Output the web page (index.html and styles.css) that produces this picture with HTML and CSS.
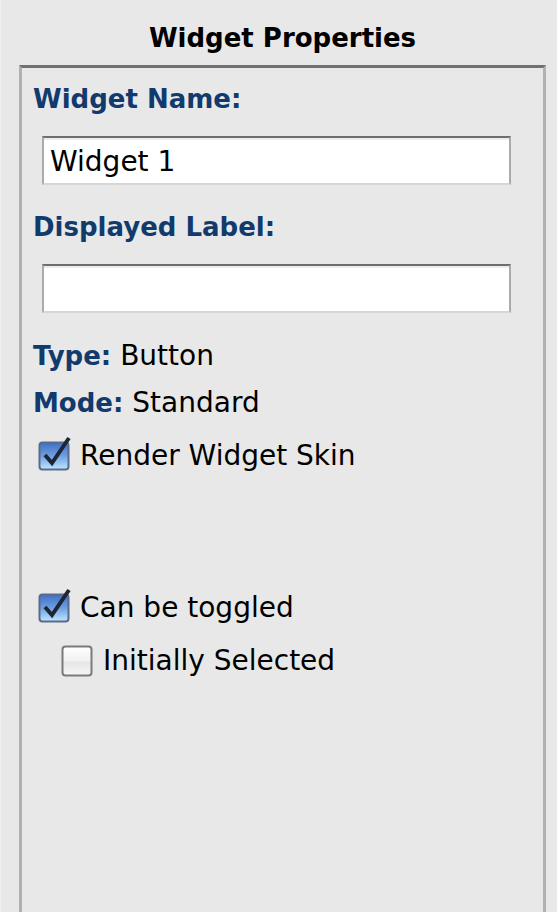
FILE: index.html
```html
<!DOCTYPE html>
<html>
<head>
<meta charset="utf-8">
<link rel="stylesheet" href="styles.css">
</head>
<body>
<div class="page">
  <div class="title">Widget Properties</div>
  <section class="panel">
    <div class="field-label first">Widget Name:</div>
    <div class="input">Widget 1</div>
    <div class="field-label">Displayed Label:</div>
    <div class="input"></div>
    <div class="info type"><b>Type:</b> Button</div>
    <div class="info mode"><b>Mode:</b> Standard</div>
    <div class="check render">
      <svg class="box" width="32" height="30" viewBox="0 0 32 30">
        <defs>
          <linearGradient id="blue" x1="0" y1="0" x2="0" y2="1">
            <stop offset="0" stop-color="#3d6fc4"/>
            <stop offset="0.5" stop-color="#6f9fe2"/>
            <stop offset="1" stop-color="#bfe8ff"/>
          </linearGradient>
        </defs>
        <rect x="1.5" y="1.5" width="29" height="27" rx="3" fill="url(#blue)" stroke="#5b6a8c" stroke-width="2"/>
        <path d="M7 14 L14 22 L31 -3" fill="none" stroke="#1c2634" stroke-width="4"/>
      </svg>
      <span>Render Widget Skin</span>
    </div>
    <div class="check toggled">
      <svg class="box" width="32" height="30" viewBox="0 0 32 30">
        <rect x="1.5" y="1.5" width="29" height="27" rx="3" fill="url(#blue)" stroke="#5b6a8c" stroke-width="2"/>
        <path d="M7 14 L14 22 L31 -3" fill="none" stroke="#1c2634" stroke-width="4"/>
      </svg>
      <span>Can be toggled</span>
    </div>
    <div class="check sub">
      <svg class="box" width="32" height="32" viewBox="0 0 32 32">
        <defs>
          <linearGradient id="white" x1="0" y1="0" x2="0" y2="1">
            <stop offset="0" stop-color="#ffffff"/>
            <stop offset="0.5" stop-color="#f1f1f1"/>
            <stop offset="0.55" stop-color="#e6e6e6"/>
            <stop offset="1" stop-color="#f6f6f6"/>
          </linearGradient>
        </defs>
        <rect x="1.5" y="1.5" width="29" height="29" rx="3" fill="url(#white)" stroke="#7a7a7a" stroke-width="2"/>
      </svg>
      <span>Initially Selected</span>
    </div>
  </section>
</div>
</body>
</html>
```
FILE: styles.css
```css
html, body {
  margin: 0;
  padding: 0;
  background: #e8e8e8;
  overflow: hidden;
}
.page {
  height: 912px;
  padding-top: 21px;
  box-sizing: border-box;
  font-family: "DejaVu Sans", "Verdana", sans-serif;
  font-size: 28px;
  line-height: 34px;
  color: #000;
  border-left: 1px solid #f0f0f0;
  display: flex;
  flex-direction: column;
}
.title {
  font-weight: bold;
  font-size: 26px;
  text-align: center;
  margin-left: 18px;
  width: 527px;
  height: 34px;
}
.panel {
  margin-top: 10px;
  margin-left: 18px;
  width: 527px;
  flex: 1;
  box-sizing: border-box;
  border-top: 3px solid #717171;
  border-left: 3px solid #b1b1b1;
  border-right: 3px solid #b1b1b1;
  padding: 0 0 0 11px;
  display: flex;
  flex-direction: column;
  align-items: flex-start;
}
.field-label {
  font-weight: bold;
  font-size: 26px;
  color: #113a6d;
  margin-top: 25px;
}
.field-label.first {
  margin-top: 14px;
}
.input {
  margin-top: 20px;
  margin-left: 9px;
  width: 469px;
  height: 49px;
  box-sizing: border-box;
  background: #fff;
  border-top: 2px solid #6e6e6e;
  border-left: 2px solid #ababab;
  border-right: 2px solid #ababab;
  border-bottom: 2px solid #d6d6d6;
  box-shadow: inset 0 2px 0 #ededed;
  padding: 7px 0 0 6px;
  overflow: hidden;
}
.info b {
  font-size: 26px;
  color: #113a6d;
}
.info.type {
  margin-top: 26px;
}
.info.mode {
  margin-top: 13px;
}
.check {
  display: flex;
  align-items: center;
  gap: 10px;
  margin-left: 5px;
}
.check .box {
  overflow: visible;
  flex: none;
}
.check.render {
  margin-top: 19px;
}
.check.toggled {
  margin-top: 118px;
}
.check.sub {
  margin-top: 19px;
  margin-left: 28px;
}
```
